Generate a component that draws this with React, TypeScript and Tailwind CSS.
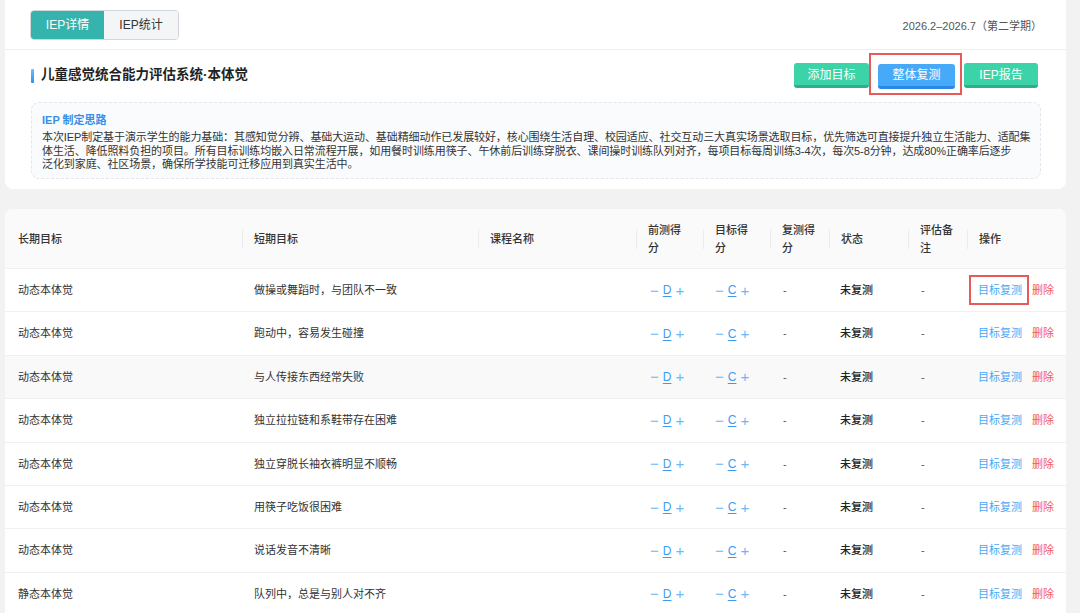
import React from "react";

const FONT = { fontFamily: '"Liberation Sans", "Noto Sans CJK SC", sans-serif' };

const rows: [string, string][] = [
  ["动态本体觉", "做操或舞蹈时，与团队不一致"],
  ["动态本体觉", "跑动中，容易发生碰撞"],
  ["动态本体觉", "与人传接东西经常失败"],
  ["动态本体觉", "独立拉拉链和系鞋带存在困难"],
  ["动态本体觉", "独立穿脱长袖衣裤明显不顺畅"],
  ["动态本体觉", "用筷子吃饭很困难"],
  ["动态本体觉", "说话发音不清晰"],
  ["静态本体觉", "队列中，总是与别人对不齐"],
];

const COLS = "grid grid-cols-[237px_236px_158px_67px_67px_59px_79px_59px_1fr]";

function Score({ v }: { v: string }) {
  return (
    <div className="flex items-center gap-[4px] text-[12px]">
      <span className="text-[#6db8f4] text-[15px] leading-none font-light">−</span>
      <span className="text-[#3d9cf0] underline underline-offset-2">{v}</span>
      <span className="text-[#6db8f4] text-[15px] leading-none font-light">+</span>
    </div>
  );
}

function Head({ children, divider = true }: { children: React.ReactNode; divider?: boolean }) {
  return (
    <div className="relative flex items-center pl-[12px] text-[11px] leading-[18px] font-medium text-[#333]">
      {divider && <span className="absolute left-0 top-1/2 -translate-y-1/2 h-[20px] w-px bg-[#ececec]" />}
      <div>{children}</div>
    </div>
  );
}

export default function App() {
  return (
    <div className="min-h-[613px] w-[1080px] bg-[#f2f2f2] pl-[5px] pr-[14px] overflow-hidden" style={FONT}>
      {/* Top card */}
      <div className="bg-white rounded-b-lg">
        <div className="h-[50px] border-b border-[#efefef] flex items-center justify-between pl-[25px] pr-[24px]">
          <div className="flex h-[30px] rounded-[4px] border border-[#d3d6db] overflow-hidden text-[12px]">
            <div className="w-[73px] bg-[#35b3ad] text-white flex items-center justify-center">IEP详情</div>
            <div className="w-[74px] bg-[#f4f5f7] text-[#333] flex items-center justify-center">IEP统计</div>
          </div>
          <div className="text-[11px] text-[#555] pt-[3px]">2026.2–2026.7（第二学期）</div>
        </div>
        <div className="pl-[26px] pr-[25px] pt-[13px] pb-[10px]">
          <div className="flex items-center justify-between h-[25px] pr-[3px]">
            <div className="flex items-center gap-[7px]">
              <span className="w-[3px] h-[14px] rounded-[1px] bg-gradient-to-b from-[#6cc0ff] to-[#2e8ef0]" />
              <span className="text-[13.5px] font-bold text-[#222]">儿童感觉统合能力评估系统·本体觉</span>
            </div>
            <div className="flex items-center gap-[9px]">
              <button className="w-[75px] h-[25px] rounded-[3px] bg-[#3dd3a8] border-b-[3px] border-[#2eaf8a] text-white text-[12px] pt-[1px]">添加目标</button>
              <div className="relative">
                <button className="w-[77px] h-[25px] rounded-[3px] bg-[#47aaf8] border-b-[3px] border-[#2c88e6] text-white text-[12px] pt-[1px]">整体复测</button>
                <span className="absolute left-[-9px] top-[-9px] w-[93px] h-[42px] border-2 border-[#e8595a]" />
              </div>
              <button className="w-[74px] h-[25px] rounded-[3px] bg-[#3dd3a8] border-b-[3px] border-[#2eaf8a] text-white text-[12px] pt-[1px]">IEP报告</button>
            </div>
          </div>
          <div className="mt-[14px] h-[77px] rounded-[8px] border border-dashed border-[#e3e6ec] bg-[#fafbfd] px-[10px] pt-[10px]">
            <div className="text-[11px] font-bold text-[#3a8ee6] leading-[15px]">IEP 制定思路</div>
            <div className="mt-[3px] text-[11px] leading-[13.5px] text-[#333] whitespace-nowrap tracking-[-0.09px]">
              <div>本次IEP制定基于演示学生的能力基础：其感知觉分辨、基础大运动、基础精细动作已发展较好，核心围绕生活自理、校园适应、社交互动三大真实场景选取目标，优先筛选可直接提升独立生活能力、适配集</div>
              <div>体生活、降低照料负担的项目。所有目标训练均嵌入日常流程开展，如用餐时训练用筷子、午休前后训练穿脱衣、课间操时训练队列对齐，每项目标每周训练3-4次，每次5-8分钟，达成80%正确率后逐步</div>
              <div>泛化到家庭、社区场景，确保所学技能可迁移应用到真实生活中。</div>
            </div>
          </div>
        </div>
      </div>

      {/* Table card */}
      <div className="mt-[20px] bg-white rounded-t-lg overflow-hidden">
        <div className={`${COLS} h-[60px] bg-[#fafafa] border-b border-[#f0f0f0]`}>
          <Head divider={false}><span className="pl-[1px]">长期目标</span></Head>
          <Head>短期目标</Head>
          <Head>课程名称</Head>
          <Head>前测得<br />分</Head>
          <Head>目标得<br />分</Head>
          <Head>复测得<br />分</Head>
          <Head>状态</Head>
          <Head>评估备<br />注</Head>
          <Head>操作</Head>
        </div>
        {rows.map(([a, b], i) => (
          <div
            key={i}
            className={`${COLS} h-[43.4px] border-b border-[#f0f0f0] text-[11px] text-[#333] ${i === 2 ? "bg-[#f9f9f9]" : "bg-white"}`}
          >
            <div className="flex items-center pl-[13px]">{a}</div>
            <div className="flex items-center pl-[12px]">{b}</div>
            <div />
            <div className="flex items-center pl-[14px]"><Score v="D" /></div>
            <div className="flex items-center pl-[12px]"><Score v="C" /></div>
            <div className="flex items-center pl-[13px] text-[#555]">-</div>
            <div className="flex items-center pl-[11px] font-medium text-[#222]">未复测</div>
            <div className="flex items-center pl-[13px] text-[#555]">-</div>
            <div className="flex items-center pl-[11px] gap-[10px]">
              <span className="relative text-[#4aa8f5]">
                目标复测
                {i === 0 && <span className="absolute left-[-9px] right-[-7px] top-[-7px] bottom-[-7px] border-2 border-[#e8595a]" />}
              </span>
              <span className="text-[#f25c5c]">删除</span>
            </div>
          </div>
        ))}
      </div>
    </div>
  );
}
